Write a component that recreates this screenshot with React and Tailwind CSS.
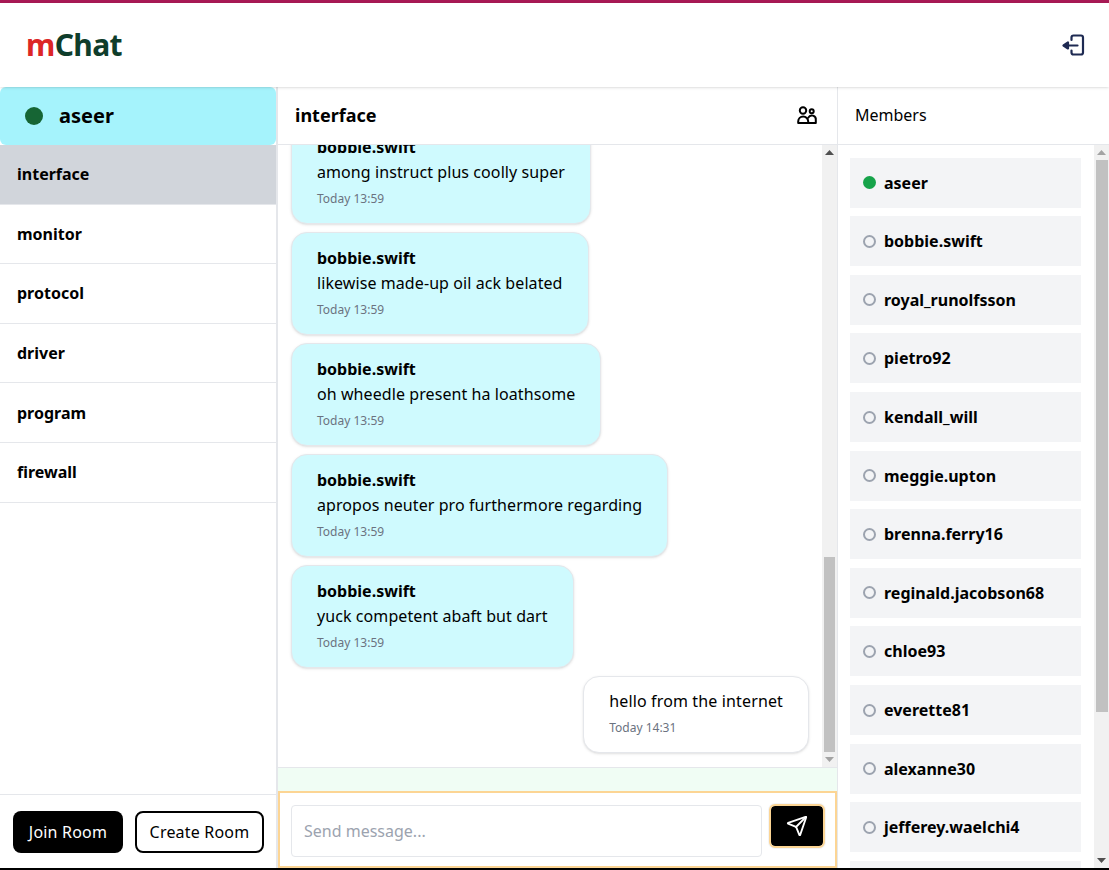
import { Send } from "lucide-react";

const rooms = ["interface", "monitor", "protocol", "driver", "program", "firewall"];

const members = [
  "aseer", "bobbie.swift", "royal_runolfsson", "pietro92", "kendall_will", "meggie.upton",
  "brenna.ferry16", "reginald.jacobson68", "chloe93", "everette81", "alexanne30",
  "jefferey.waelchi4",
];

const messages = [
  "among instruct plus coolly super",
  "likewise made-up oil ack belated",
  "oh wheedle present ha loathsome",
  "apropos neuter pro furthermore regarding",
  "yuck competent abaft but dart",
];

function LogoutIcon() {
  return (
    <svg viewBox="0 0 24 24" className="w-6 h-6 text-[#1e2a52]" fill="none" stroke="currentColor" strokeWidth="2.2" strokeLinecap="round" strokeLinejoin="round">
      <path d="M9.5 7V4.5a2 2 0 0 1 2-2h7.5a2 2 0 0 1 2 2v15a2 2 0 0 1-2 2h-7.5a2 2 0 0 1-2-2V17.5" />
      <path d="M5 12.5h10.5" />
      <path d="M1.5 12.5L6 9.5v6z" fill="currentColor" />
    </svg>
  );
}

function UsersIcon() {
  return (
    <svg viewBox="0 0 24 24" className="w-6 h-6" fill="none" stroke="currentColor" strokeWidth="2" strokeLinecap="round" strokeLinejoin="round">
      <circle cx="8" cy="7.5" r="3.2" />
      <circle cx="16.7" cy="8.3" r="2" />
      <path d="M3.2 20v-1.5a5 5 0 0 1 10 0V20z" />
      <path d="M13.3 14.6a4 4 0 0 1 7.5 2.4V20h-7.6" />
    </svg>
  );
}

function ScrollArrow({ points, color }) {
  return (
    <svg viewBox="0 0 15 15" className="w-[15px] h-[15px] shrink-0">
      <polygon points={points} fill={color} />
    </svg>
  );
}

// the browser's classic scrollbar, drawn because the list itself does not scroll here
function Scrollbar({ upColor, downColor, trackClass, thumbClass }) {
  return (
    <div className="w-[15px] shrink-0 bg-[#f1f1f1] flex flex-col">
      <ScrollArrow points="3,10 12,10 7.5,5" color={upColor} />
      <div className={`flex-1 flex flex-col ${trackClass}`}>
        <div className={`bg-[#c1c1c1] ${thumbClass}`} />
      </div>
      <ScrollArrow points="3,5 12,5 7.5,10" color={downColor} />
    </div>
  );
}

function Message({ text }) {
  return (
    <div className="self-start shrink-0 bg-[#cffafe] rounded-2xl border border-[#e5e7eb] shadow px-[25px] pt-[13px] h-[103px]">
      <p className="font-bold leading-6 mb-px">bobbie.swift</p>
      <p className="leading-6 tracking-[0.08px]">{text}</p>
      <p className="text-xs text-[#6b7280] mt-[7px] leading-4">Today 13:59</p>
    </div>
  );
}

export default function App() {
  return (
    <div className="h-screen bg-black overflow-hidden text-black font-['Noto_Sans',sans-serif]">
      <div className="h-[868px] bg-white flex flex-col border-t-[3px] border-[#a81a55]">
        <header className="h-[84px] shrink-0 flex items-center justify-between pl-[26px] pr-[23px] shadow relative">
          <h1 className="text-3xl font-bold tracking-[-0.6px]">
            <span className="text-[#dc2626]">m</span>
            <span className="text-[#0f3d2b]">Chat</span>
          </h1>
          <LogoutIcon />
        </header>

        <div className="flex-1 flex min-h-0">
          <aside className="w-[278px] shrink-0 border-r-2 border-[#e5e7eb] flex flex-col">
            <div className="h-[58px] shrink-0 bg-[#a5f3fc] rounded-md flex items-center pl-[25px] gap-4">
              <span className="w-[18px] h-[18px] rounded-full bg-[#166534]" />
              <span className="text-xl font-bold">aseer</span>
            </div>
            <ul className="flex-1">
              {rooms.map((room, i) => (
                <li key={room} className={`h-[59.6px] flex items-center pl-[17px] font-bold border-b border-[#e5e7eb] ${i === 0 ? "bg-[#d1d5db]" : ""}`}>
                  {room}
                </li>
              ))}
            </ul>
            <div className="h-[74px] shrink-0 border-t border-[#e5e7eb] flex items-center pl-[13px] gap-3">
              <button className="h-[42px] w-[110px] bg-black text-white rounded-lg tracking-[0.2px]">Join Room</button>
              <button className="h-[42px] w-[129px] bg-white border-2 border-black rounded-lg tracking-[0.2px]">Create Room</button>
            </div>
          </aside>

          <main className="flex-1 min-w-0 flex flex-col">
            <div className="h-[58px] shrink-0 flex items-center justify-between pl-[17px] pr-[18px] pb-0.5 border-b border-[#e5e7eb]">
              <h2 className="text-lg font-bold">interface</h2>
              <UsersIcon />
            </div>
            <div className="flex-1 min-h-0 flex">
              <div className="flex-1 min-w-0 overflow-hidden flex flex-col justify-end gap-2 pl-[13px] pr-[13px] pb-[14px]">
                {messages.map((text) => (
                  <Message key={text} text={text} />
                ))}
                <div className="self-end shrink-0 bg-white rounded-2xl border border-[#e5e7eb] shadow px-[25px] pt-[12px] h-[77px]">
                  <p className="leading-6 tracking-[0.14px]">hello from the internet</p>
                  <p className="text-xs text-[#6b7280] mt-[7px] leading-4">Today 14:31</p>
                </div>
              </div>
              <Scrollbar upColor="#505050" downColor="#a3a3a3" trackClass="justify-end" thumbClass="h-[195px] mx-[2px]" />
            </div>
            <div className="h-[24px] shrink-0 bg-[#f0fdf4] border-t border-[#e5e7eb]" />
            <div className="h-[77px] shrink-0 border-2 border-[#fcd594] flex items-start pl-[11px] pr-[12px] pt-[12px] gap-[9px]">
              <input placeholder="Send message..." className="flex-1 min-w-0 h-[52px] px-3 border border-[#e5e7eb] rounded placeholder:text-[#9ca3af]" />
              <button className="w-[52px] h-[40px] mt-px bg-black text-white rounded-sm flex items-center justify-center outline-2 outline-[#fcd594] shadow-[0_0_0_3px_#f3f4f6]">
                <Send className="w-[22px] h-[22px]" />
              </button>
            </div>
          </main>

          <section className="w-[272px] shrink-0 border-l border-[#e5e7eb] flex flex-col">
            <div className="h-[58px] shrink-0 flex items-center pl-[17px] pb-0.5 border-b border-[#e5e7eb]">Members</div>
            <div className="flex-1 min-h-0 flex">
              <ul className="flex-1 min-w-0 overflow-hidden pl-3 pr-[13px] pt-[12.7px] flex flex-col gap-[8.6px]">
                {members.map((name, i) => (
                  <li key={name} className="h-[50px] shrink-0 bg-[#f3f4f6] flex items-center pl-[13px] gap-2 font-bold">
                    <span className={`w-[13px] h-[13px] rounded-full ${i === 0 ? "bg-[#16a34a]" : "border-2 border-[#9ca3af]"}`} />
                    {name}
                  </li>
                ))}
                <li className="h-[50px] shrink-0 bg-[#f3f4f6]" />
              </ul>
              <Scrollbar upColor="#a3a3a3" downColor="#505050" trackClass="justify-start" thumbClass="h-[552px] ml-[2px] mr-px" />
            </div>
          </section>
        </div>
      </div>
    </div>
  );
}
